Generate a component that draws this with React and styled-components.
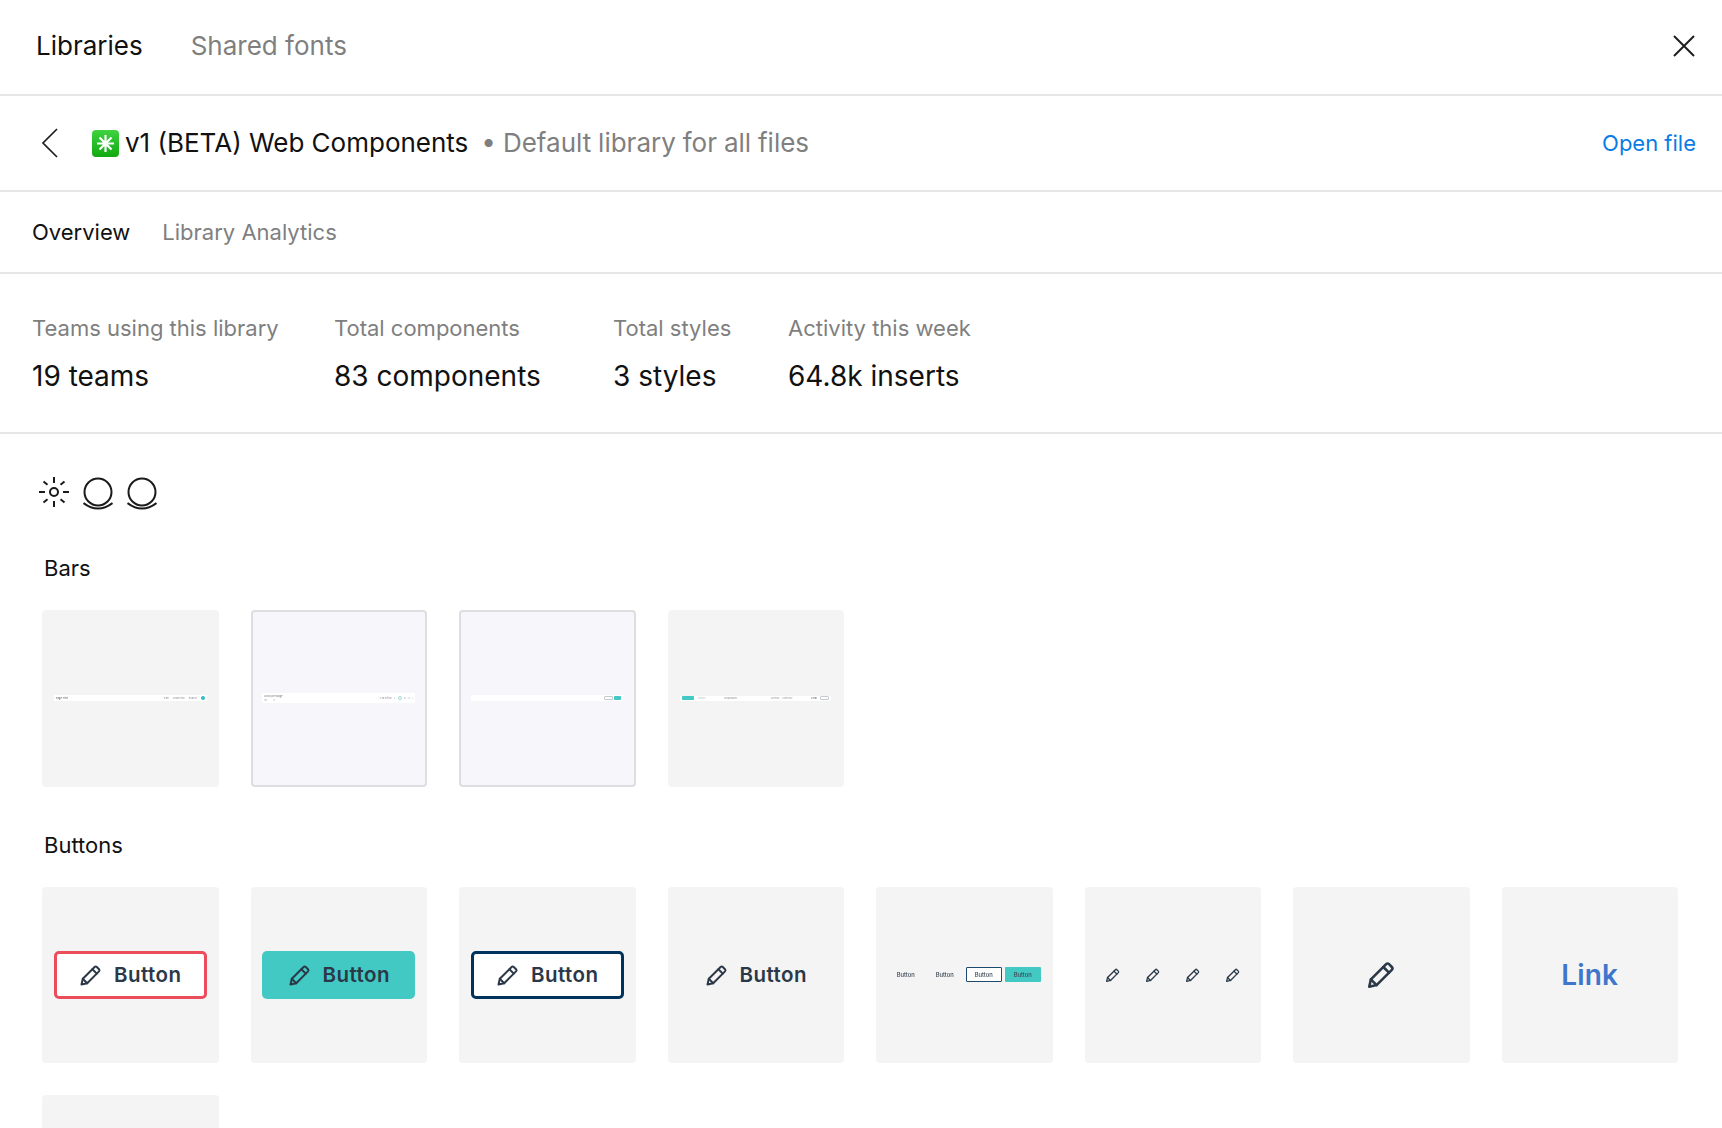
import React from "react";
import styled, { createGlobalStyle } from "styled-components";

const Global = createGlobalStyle`
  html, body { margin: 0; padding: 0; background: #fff; }
  body { font-family: Inter, "Noto Sans", sans-serif; color: #111; overflow: hidden; height: 1128px; }
  * { box-sizing: border-box; }
`;

const Page = styled.div`
  width: 1722px;
  height: 1128px;
  overflow: hidden;
`;
const Bar = styled.header`
  height: ${(p) => p.$h}px;
  border-bottom: 2px solid #e6e6e6;
  display: flex;
  align-items: center;
  padding: 0 ${(p) => p.$right ?? 0}px 0 ${(p) => p.$left}px;
`;
const MainTab = styled.span`
  font-size: 26px;
  line-height: 30px;
  margin-bottom: 2px;
  color: ${(p) => (p.$active ? "#111" : "#7f7f7f")};
  margin-right: 48px;
`;
const SubTab = styled.span`
  font-size: 22px;
  line-height: 28px;
  color: ${(p) => (p.$active ? "#111" : "#7f7f7f")};
  margin-right: 32px;
`;
const Spacer = styled.div`flex: 1;`;
const IconSlot = styled.svg`
  display: block;
  flex: none;
`;
const Emoji = styled.svg`
  display: block;
  flex: none;
  margin: 0 6px 0 32px;
`;
const Title = styled.span`
  font-size: 26px;
  line-height: 32px;
  color: #111;
`;
const Subtitle = styled.span`
  font-size: 26px;
  line-height: 32px;
  color: #7f7f7f;
  margin-left: 13px;
  word-spacing: -0.4px;
`;
const OpenLink = styled.a`
  font-size: 22px;
  line-height: 28px;
  color: #0a7ce6;
`;
const Stats = styled.section`
  height: 160px;
  border-bottom: 2px solid #e6e6e6;
  padding: 40px 0 0 32px;
  display: grid;
  grid-template-columns: 302px 279px 175px auto;
  justify-content: start;
  align-content: start;
`;
const Stat = styled.div`
  display: flex;
  flex-direction: column;
  gap: 17px;
`;
const StatLabel = styled.span`
  font-size: 22px;
  line-height: 28px;
  color: #7f7f7f;
  white-space: nowrap;
`;
const StatValue = styled.span`
  font-size: 28px;
  line-height: 34px;
  color: #111;
  white-space: nowrap;
`;
const Gallery = styled.main`
  padding: 43px 44px 0 42px;
`;
const EmojiRow = styled.div`
  display: flex;
  gap: 14px;
  height: 30px;
  margin: 0 0 47px -3px;
`;
const SectionLabel = styled.h3`
  font-size: 22px;
  line-height: 28px;
  font-weight: 400;
  color: #111;
  margin: 0 0 28px 2px;
`;
const Grid = styled.div`
  display: grid;
  grid-template-columns: repeat(8, 1fr);
  gap: 32px;
  margin-bottom: 44px;
`;
const Card = styled.div`
  height: 176.5px;
  border-radius: 4px;
  background: ${(p) => (p.$framed ? "#f6f6fb" : "#f4f4f4")};
  border: ${(p) => (p.$framed ? "2px solid #dddde2" : "none")};
  display: flex;
  align-items: center;
  justify-content: center;
`;
const MiniBar = styled.div`
  width: ${(p) => p.$w}px;
  height: ${(p) => p.$h}px;
  background: #fff;
  display: flex;
  align-items: center;
  padding: 0 2px;
  gap: ${(p) => p.$gap ?? 4}px;
  font-size: 3px;
  color: #667;
  white-space: nowrap;
  filter: blur(0.5px);
`;
const MiniText = styled.span`
  font-size: 2.6px;
  line-height: 3px;
  color: ${(p) => p.$c ?? "#8a8f96"};
`;
const MiniStack = styled.div`
  display: flex;
  flex-direction: column;
  gap: 0.5px;
`;
const Fill = styled.div`flex: 1;`;
const Dot = styled.span`
  width: 4px;
  height: 4px;
  border-radius: 50%;
  background: #2fbfc0;
`;
const MiniRing = styled(Dot)`
  background: #fff;
  border: 0.5px solid #9cdcd9;
`;
const MiniChip = styled.span`
  width: ${(p) => p.$w}px;
  height: 4px;
  border-radius: 1px;
  background: ${(p) => (p.$teal ? "#42c9c3" : "#fff")};
  border: ${(p) => (p.$teal ? "none" : "0.5px solid #c6cad0")};
`;
const Button = styled.div`
  width: 153px;
  height: 48px;
  border-radius: 5px;
  display: flex;
  align-items: center;
  justify-content: center;
  gap: 11px;
  font-size: 20.5px;
  font-weight: 600;
  letter-spacing: 0.45px;
  color: #2b3848;
  background: ${(p) => p.$bg ?? "transparent"};
  border: ${(p) => (p.$line ? `3px solid ${p.$line}` : "none")};
`;
const Row = styled.div`
  display: flex;
  align-items: center;
  gap: ${(p) => p.$gap}px;
`;
const TinyButton = styled.div`
  width: 36px;
  height: 15px;
  border-radius: 1px;
  display: flex;
  align-items: center;
  justify-content: center;
  font-size: 5.8px;
  font-weight: 500;
  color: #3a4654;
  background: ${(p) => p.$bg ?? "transparent"};
  border: ${(p) => (p.$line ? `1px solid ${p.$line}` : "none")};
  filter: blur(0.25px);
`;
const LinkText = styled.span`
  font-size: 28px;
  font-weight: 600;
  letter-spacing: 0.2px;
  color: #3f75cb;
`;

const Pencil = ({ size = 24, weight = 2 }) => (
  <IconSlot width={size} height={size} viewBox="0 0 24 24" fill="none" stroke="#2b3848" strokeWidth={weight} strokeLinejoin="round" strokeLinecap="round">
    <path d="M2.5 21.5 L3.8 15.8 L15.6 4 a1.6 1.6 0 0 1 2.2 0 L20 6.2 a1.6 1.6 0 0 1 0 2.2 L8.2 20.2 Z" />
    <path d="M13.4 6.2 L17.8 10.6" />
    <path d="M3.8 15.8 L8.2 20.2" />
  </IconSlot>
);

const Sun = () => (
  <IconSlot width="30" height="30" viewBox="0 0 30 30" fill="none" stroke="#1a1a1a" strokeWidth="2">
    <circle cx="15" cy="15" r="4" />
    <path d="M15 0v6M15 24v6M0 15h6M24 15h6M4.5 4.5l4 3.2M25.5 4.5l-4 3.2M4.5 25.5l4-3.2M25.5 25.5l-4-3.2" />
  </IconSlot>
);
const Ring = () => (
  <IconSlot width="30" height="33" viewBox="0 0 30 33" fill="none" stroke="#1a1a1a" strokeWidth="2">
    <circle cx="15" cy="15" r="13.5" />
    <path d="M0.5 26 Q15 37 29.5 26" />
  </IconSlot>
);

export default function App() {
  return (
    <Page>
      <Global />
      <Bar $h={96} $left={36} $right={26}>
        <MainTab $active>Libraries</MainTab>
        <MainTab>Shared fonts</MainTab>
        <Spacer />
        <IconSlot width="24" height="24" viewBox="0 0 24 24" fill="none" stroke="#1f1f1f" strokeWidth="2">
          <path d="M2 1 L22 21 M22 1 L2 21" />
        </IconSlot>
      </Bar>
      <Bar $h={96} $left={40} $right={26}>
        <IconSlot width="20" height="32" viewBox="0 0 20 32" fill="none" stroke="#1f1f1f" strokeWidth="1.7">
          <path d="M17 2 L3 16 L17 30" />
        </IconSlot>
        <Emoji width="27" height="27" viewBox="0 0 27 27">
          <defs>
            <linearGradient id="emojiGreen" x1="0" y1="0" x2="0" y2="1">
              <stop offset="0" stopColor="#3fd33f" />
              <stop offset="1" stopColor="#11a811" />
            </linearGradient>
          </defs>
          <rect width="27" height="27" rx="4" fill="url(#emojiGreen)" />
          <path d="M13.5 5v17M5 13.5h17M7.5 7.5l12 12M19.5 7.5l-12 12" stroke="#fff" strokeWidth="2.2" />
        </Emoji>
        <Title>v1 (BETA) Web Components</Title>
        <Subtitle>• Default library for all files</Subtitle>
        <Spacer />
        <OpenLink>Open file</OpenLink>
      </Bar>
      <Bar $h={82} $left={32}>
        <SubTab $active>Overview</SubTab>
        <SubTab>Library Analytics</SubTab>
      </Bar>
      <Stats>
        <Stat><StatLabel>Teams using this library</StatLabel><StatValue>19 teams</StatValue></Stat>
        <Stat><StatLabel>Total components</StatLabel><StatValue>83 components</StatValue></Stat>
        <Stat><StatLabel>Total styles</StatLabel><StatValue>3 styles</StatValue></Stat>
        <Stat><StatLabel>Activity this week</StatLabel><StatValue>64.8k inserts</StatValue></Stat>
      </Stats>
      <Gallery>
        <EmojiRow><Sun /><Ring /><Ring /></EmojiRow>
        <SectionLabel>Bars</SectionLabel>
        <Grid>
          <Card>
            <MiniBar $w={153} $h={6}>
              <MiniText $c="#555">Page Title</MiniText>
              <Fill />
              <MiniText>Edit</MiniText>
              <MiniText>Share link</MiniText>
              <MiniText>Export</MiniText>
              <Dot />
            </MiniBar>
          </Card>
          <Card $framed>
            <MiniBar $w={153} $h={10} $gap={2.5}>
              <MiniStack>
                <MiniText $c="#777">Rows per page</MiniText>
                <MiniText>10 &nbsp;&nbsp;&nbsp;&nbsp;&nbsp;&nbsp;&nbsp; v</MiniText>
              </MiniStack>
              <Fill />
              <MiniText $c="#777">1-10 of 88</MiniText>
              <MiniText>‹</MiniText>
              <MiniRing />
              <MiniText>2</MiniText>
              <MiniText>3</MiniText>
              <MiniText>›</MiniText>
            </MiniBar>
          </Card>
          <Card $framed>
            <MiniBar $w={152} $h={6} $gap={1}>
              <Fill />
              <MiniChip $w={9} />
              <MiniChip $w={7} $teal />
            </MiniBar>
          </Card>
          <Card>
            <MiniBar $w={151} $h={5} $gap={3}>
              <MiniChip $w={12} $teal />
              <MiniText $c="#c4c6ca">Search</MiniText>
              <Fill />
              <MiniText>Dropdown</MiniText>
              <Fill />
              <Fill />
              <MiniText>Sort by</MiniText>
              <MiniText>Filter by</MiniText>
              <Fill />
              <MiniText $c="#666">Clear</MiniText>
              <MiniChip $w={9} />
            </MiniBar>
          </Card>
        </Grid>
        <SectionLabel>Buttons</SectionLabel>
        <Grid>
          <Card><Button $line="#eb4d5c" $bg="#fff"><Pencil />Button</Button></Card>
          <Card><Button $bg="#42c9c3"><Pencil />Button</Button></Card>
          <Card><Button $line="#00335c" $bg="#fff"><Pencil />Button</Button></Card>
          <Card><Button><Pencil />Button</Button></Card>
          <Card>
            <Row $gap={3}>
              <TinyButton>Button</TinyButton>
              <TinyButton>Button</TinyButton>
              <TinyButton $line="#1c4a70" $bg="#fff">Button</TinyButton>
              <TinyButton $bg="#42c9c3">Button</TinyButton>
            </Row>
          </Card>
          <Card>
            <Row $gap={24}>
              <Pencil size={16} />
              <Pencil size={16} />
              <Pencil size={16} />
              <Pencil size={16} />
            </Row>
          </Card>
          <Card><Pencil size={31} /></Card>
          <Card><LinkText>Link</LinkText></Card>
          <Card />
        </Grid>
      </Gallery>
    </Page>
  );
}
